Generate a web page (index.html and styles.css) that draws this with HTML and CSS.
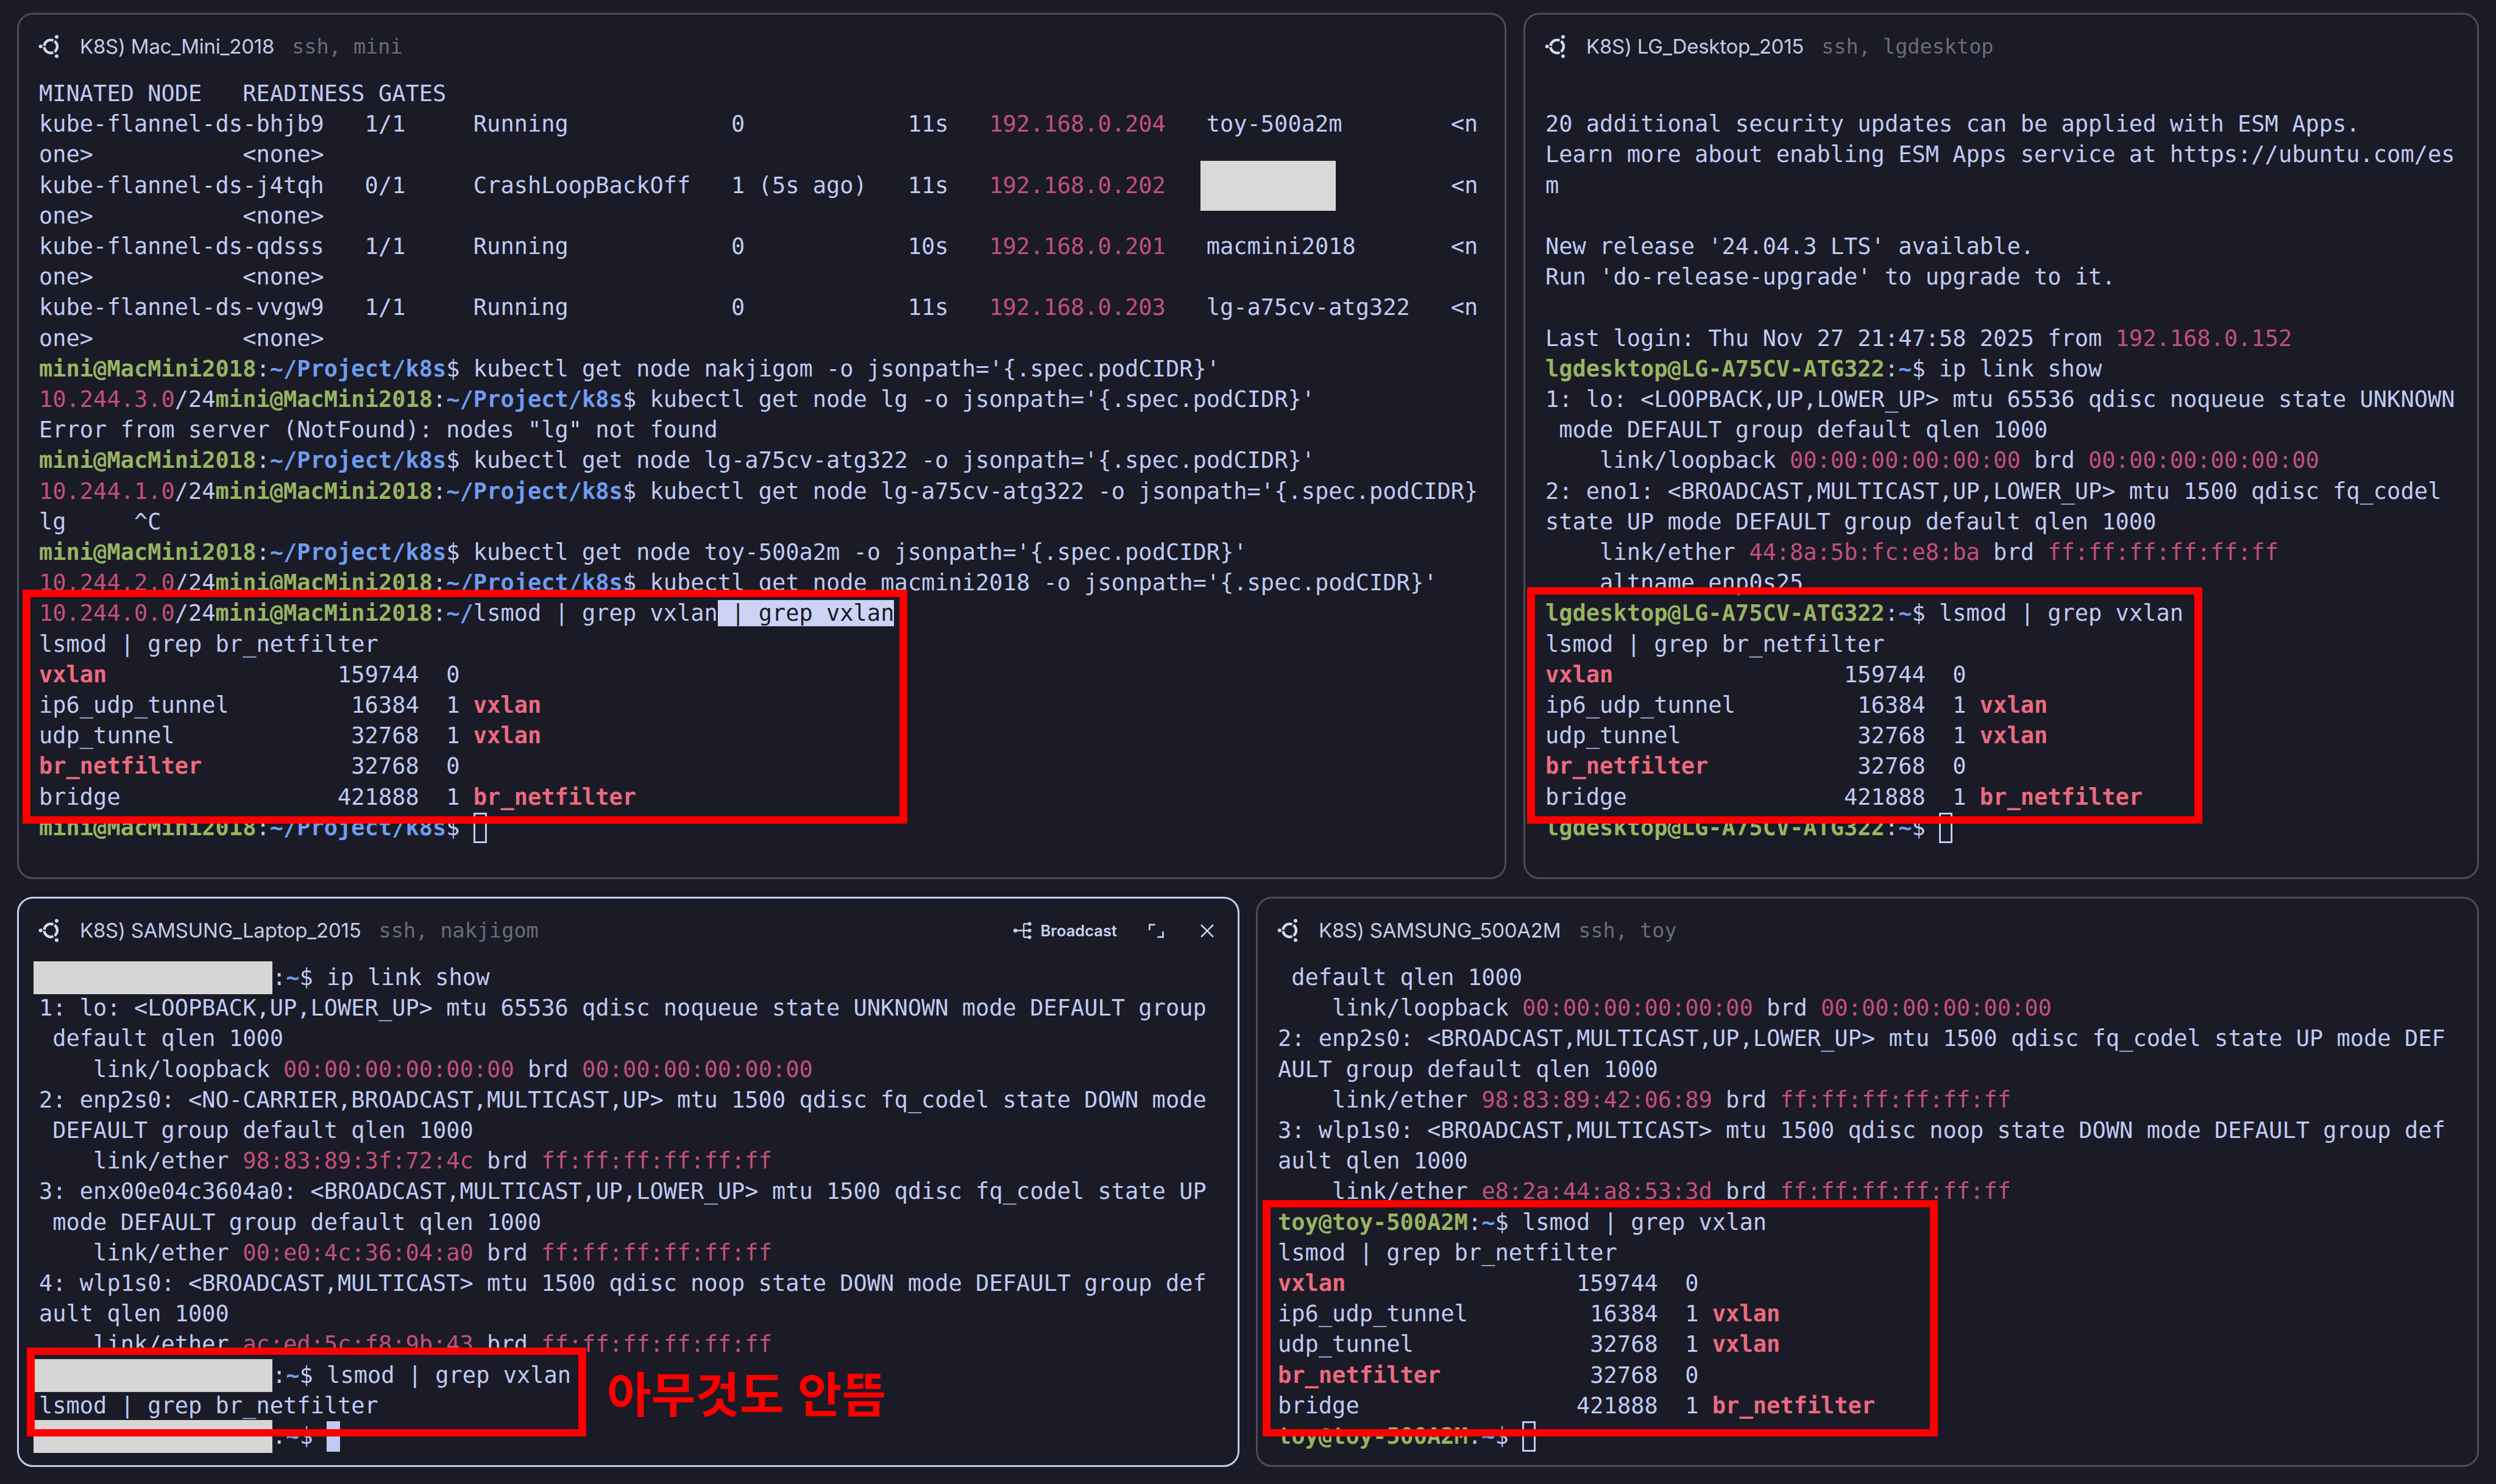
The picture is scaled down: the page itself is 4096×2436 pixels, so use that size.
FILE: index.html
```html
<!DOCTYPE html>
<html lang="en">
<head>
<meta charset="utf-8">
<title>K8S terminals</title>
<link rel="stylesheet" href="styles.css">
</head>
<body>
<main class="screen">
  <svg class="defs" width="0" height="0" aria-hidden="true">
    <symbol id="ubuntu" viewBox="0 0 36 37" overflow="visible">
      <circle cx="19.200" cy="18.300" r="10.700" pathLength="360" fill="none" stroke="currentColor" stroke-width="4.400" stroke-dasharray="54 12 108 12 108 12 54 0"/>
      <g fill="currentColor">
        <circle cx="2.700" cy="18.300" r="3"/>
        <circle cx="29" cy="2.600" r="3"/>
        <circle cx="29" cy="34.200" r="3"/>
      </g>
    </symbol>
  </svg>

  <div class="row row-top">
    <section class="pane pane-tl">
      <header class="tab"><svg class="os"><use href="#ubuntu"/></svg><span class="name">K8S) Mac_Mini_2018</span><span class="cmd">ssh, mini</span></header>
<pre class="term">MINATED NODE   READINESS GATES
kube-flannel-ds-bhjb9   1/1     Running            0            11s   <i>192.168.0.204</i>   toy-500a2m        &lt;n
one&gt;           &lt;none&gt;
kube-flannel-ds-j4tqh   0/1     CrashLoopBackOff   1 (5s ago)   11s   <i>192.168.0.202</i>   <span class="redact-node"></span>        &lt;n
one&gt;           &lt;none&gt;
kube-flannel-ds-qdsss   1/1     Running            0            10s   <i>192.168.0.201</i>   macmini2018       &lt;n
one&gt;           &lt;none&gt;
kube-flannel-ds-vvgw9   1/1     Running            0            11s   <i>192.168.0.203</i>   lg-a75cv-atg322   &lt;n
one&gt;           &lt;none&gt;
<b class="g">mini@MacMini2018</b>:<b class="u">~/Project/k8s</b>$ kubectl get node nakjigom -o jsonpath='{.spec.podCIDR}'
<i>10.244.3.0</i>/24<b class="g">mini@MacMini2018</b>:<b class="u">~/Project/k8s</b>$ kubectl get node lg -o jsonpath='{.spec.podCIDR}'
Error from server (NotFound): nodes "lg" not found
<b class="g">mini@MacMini2018</b>:<b class="u">~/Project/k8s</b>$ kubectl get node lg-a75cv-atg322 -o jsonpath='{.spec.podCIDR}'
<i>10.244.1.0</i>/24<b class="g">mini@MacMini2018</b>:<b class="u">~/Project/k8s</b>$ kubectl get node lg-a75cv-atg322 -o jsonpath='{.spec.podCIDR}
lg     ^C
<b class="g">mini@MacMini2018</b>:<b class="u">~/Project/k8s</b>$ kubectl get node toy-500a2m -o jsonpath='{.spec.podCIDR}'
<i>10.244.2.0</i>/24<b class="g">mini@MacMini2018</b>:<b class="u">~/Project/k8s</b>$ kubectl get node macmini2018 -o jsonpath='{.spec.podCIDR}'
<i>10.244.0.0</i>/24<b class="g">mini@MacMini2018</b>:<b class="u">~/</b>lsmod | grep vxlan<span class="sel"> | grep vxlan</span>
lsmod | grep br_netfilter
<b class="r">vxlan</b>                 159744  0
ip6_udp_tunnel         16384  1 <b class="r">vxlan</b>
udp_tunnel             32768  1 <b class="r">vxlan</b>
<b class="r">br_netfilter</b>           32768  0
bridge                421888  1 <b class="r">br_netfilter</b>
<b class="g">mini@MacMini2018</b>:<b class="u">~/Project/k8s</b>$ <span class="cur"></span></pre>
    </section>

    <section class="pane pane-tr">
      <header class="tab"><svg class="os"><use href="#ubuntu"/></svg><span class="name">K8S) LG_Desktop_2015</span><span class="cmd">ssh, lgdesktop</span></header>
<pre class="term">

20 additional security updates can be applied with ESM Apps.
Learn more about enabling ESM Apps service at https://ubuntu.com/es
m

New release '24.04.3 LTS' available.
Run 'do-release-upgrade' to upgrade to it.

Last login: Thu Nov 27 21:47:58 2025 from <i>192.168.0.152</i>
<b class="g">lgdesktop@LG-A75CV-ATG322</b>:<b class="u">~</b>$ ip link show
1: lo: &lt;LOOPBACK,UP,LOWER_UP&gt; mtu 65536 qdisc noqueue state UNKNOWN
 mode DEFAULT group default qlen 1000
    link/loopback <i>00:00:00:00:00:00</i> brd <i>00:00:00:00:00:00</i>
2: eno1: &lt;BROADCAST,MULTICAST,UP,LOWER_UP&gt; mtu 1500 qdisc fq_codel
state UP mode DEFAULT group default qlen 1000
    link/ether <i>44:8a:5b:fc:e8:ba</i> brd <i>ff:ff:ff:ff:ff:ff</i>
    altname enp0s25
<b class="g">lgdesktop@LG-A75CV-ATG322</b>:<b class="u">~</b>$ lsmod | grep vxlan
lsmod | grep br_netfilter
<b class="r">vxlan</b>                 159744  0
ip6_udp_tunnel         16384  1 <b class="r">vxlan</b>
udp_tunnel             32768  1 <b class="r">vxlan</b>
<b class="r">br_netfilter</b>           32768  0
bridge                421888  1 <b class="r">br_netfilter</b>
<b class="g">lgdesktop@LG-A75CV-ATG322</b>:<b class="u">~</b>$ <span class="cur"></span></pre>
    </section>
  </div>

  <div class="row row-bottom">
    <section class="pane pane-bl">
      <header class="tab"><svg class="os"><use href="#ubuntu"/></svg><span class="name">K8S) SAMSUNG_Laptop_2015</span><span class="cmd">ssh, nakjigom</span>
        <div class="actions">
          <span class="broadcast">
            <svg class="ic-bc" viewBox="0 0 30 30" fill="none" stroke="currentColor" stroke-width="2.400"><path d="M3 14.500H26M17 3.500H26M17 25.500H26M17 3.500V25.500"/><g fill="currentColor" stroke="none"><circle cx="3.200" cy="14.500" r="3.200"/><circle cx="26.500" cy="3.500" r="3"/><circle cx="26.500" cy="14.500" r="3"/><circle cx="26.500" cy="25.500" r="3"/></g></svg>
            Broadcast
          </span>
          <svg class="ic-full" viewBox="0 0 26 24" fill="none" stroke="currentColor" stroke-width="2.800"><path d="M1.500 11V1.500H11M24.500 13V22.500H15"/></svg>
          <svg class="ic-x" viewBox="0 0 22 22" fill="none" stroke="currentColor" stroke-width="2.600"><path d="M1 1L21 21M21 1L1 21"/></svg>
        </div>
      </header>
<pre class="term"><span class="redact"></span>:<b class="u">~</b>$ ip link show
1: lo: &lt;LOOPBACK,UP,LOWER_UP&gt; mtu 65536 qdisc noqueue state UNKNOWN mode DEFAULT group
 default qlen 1000
    link/loopback <i>00:00:00:00:00:00</i> brd <i>00:00:00:00:00:00</i>
2: enp2s0: &lt;NO-CARRIER,BROADCAST,MULTICAST,UP&gt; mtu 1500 qdisc fq_codel state DOWN mode
 DEFAULT group default qlen 1000
    link/ether <i>98:83:89:3f:72:4c</i> brd <i>ff:ff:ff:ff:ff:ff</i>
3: enx00e04c3604a0: &lt;BROADCAST,MULTICAST,UP,LOWER_UP&gt; mtu 1500 qdisc fq_codel state UP
 mode DEFAULT group default qlen 1000
    link/ether <i>00:e0:4c:36:04:a0</i> brd <i>ff:ff:ff:ff:ff:ff</i>
4: wlp1s0: &lt;BROADCAST,MULTICAST&gt; mtu 1500 qdisc noop state DOWN mode DEFAULT group def
ault qlen 1000
    link/ether <i>ac:ed:5c:f8:9b:43</i> brd <i>ff:ff:ff:ff:ff:ff</i>
<span class="redact"></span>:<b class="u">~</b>$ lsmod | grep vxlan
lsmod | grep br_netfilter
<span class="redact"></span>:<b class="u">~</b>$ <span class="cur cur-on"></span></pre>
    </section>

    <section class="pane pane-br">
      <header class="tab"><svg class="os"><use href="#ubuntu"/></svg><span class="name">K8S) SAMSUNG_500A2M</span><span class="cmd">ssh, toy</span></header>
<pre class="term"> default qlen 1000
    link/loopback <i>00:00:00:00:00:00</i> brd <i>00:00:00:00:00:00</i>
2: enp2s0: &lt;BROADCAST,MULTICAST,UP,LOWER_UP&gt; mtu 1500 qdisc fq_codel state UP mode DEF
AULT group default qlen 1000
    link/ether <i>98:83:89:42:06:89</i> brd <i>ff:ff:ff:ff:ff:ff</i>
3: wlp1s0: &lt;BROADCAST,MULTICAST&gt; mtu 1500 qdisc noop state DOWN mode DEFAULT group def
ault qlen 1000
    link/ether <i>e8:2a:44:a8:53:3d</i> brd <i>ff:ff:ff:ff:ff:ff</i>
<b class="g">toy@toy-500A2M</b>:<b class="u">~</b>$ lsmod | grep vxlan
lsmod | grep br_netfilter
<b class="r">vxlan</b>                 159744  0
ip6_udp_tunnel         16384  1 <b class="r">vxlan</b>
udp_tunnel             32768  1 <b class="r">vxlan</b>
<b class="r">br_netfilter</b>           32768  0
bridge                421888  1 <b class="r">br_netfilter</b>
<b class="g">toy@toy-500A2M</b>:<b class="u">~</b>$ <span class="cur"></span></pre>
    </section>
  </div>

  <div class="mark mark-tl"></div>
  <div class="mark mark-tr"></div>
  <div class="mark mark-bl"></div>
  <div class="mark mark-br"></div>
  <p class="note" lang="ko">아무것도 안뜸</p>
</main>
</body>
</html>
```
FILE: styles.css
```css
* { box-sizing: border-box; }
html, body { margin: 0; background: #1a1b26; }
.screen {
  position: relative;
  width: 4096px;
  height: 2436px;
  padding: 21px 28px 28px;
  display: flex;
  flex-direction: column;
  gap: 29px;
  overflow: hidden;
  color: #c0caf5;
}
.defs { position: absolute; }
.row { display: flex; }
.row-top { height: 1422px; gap: 28px; }
.row-bottom { height: 936px; gap: 27px; }
.pane {
  border: 3px solid #4b4c5a;
  border-radius: 26px;
  background: #1a1b26;
  padding: 0 33px;
  min-width: 0;
}
.pane-tl { width: 2444px; }
.pane-tr { width: 1568px; }
.pane-bl { width: 2006px; border-color: #c6cbee; }
.pane-br { width: 2007px; }
.tab {
  height: 105px;
  display: flex;
  align-items: center;
  white-space: nowrap;
}
.os { width: 36px; height: 37px; color: #d5d9f2; margin-right: 31px; flex: none; overflow: visible; }
.name {
  font: 400 33px/1 "Inter", "Liberation Sans", sans-serif;
  letter-spacing: -0.250px;
  color: #c5cbe8;
}
.cmd {
  font: 400 33.500px/1 "DejaVu Sans Mono", monospace;
  color: #6a6c7c;
  margin-left: 29px;
}
.actions {
  margin-left: auto;
  display: flex;
  align-items: center;
  margin-right: 6px;
}
.broadcast {
  display: flex;
  align-items: center;
  gap: 15px;
  font: 600 25.500px/1 "Inter", "Liberation Sans", sans-serif;
  color: #c9cfee;
}
.ic-bc { width: 30px; height: 30px; }
.ic-full { width: 25px; height: 24px; margin-left: 52px; color: #c9cfee; }
.ic-x { width: 22px; height: 22px; margin-left: 60px; color: #c9cfee; }
.term {
  margin: 0;
  font: 400 37px/50.200px "DejaVu Sans Mono", "Liberation Mono", monospace;
  color: #c0caf5;
  white-space: pre;
}
.term i { font-style: normal; color: #c2507c; }
.term b { font-weight: 700; }
.term .g { color: #97b463; }
.term .u { color: #6f9cf0; }
.term .r { color: #ec6a80; }
.sel { background: #cdd3f5; color: #1a1b26; }
.cur {
  display: inline-block;
  width: 22px;
  height: 50px;
  vertical-align: top;
  border: 3px solid #c0caf5;
}
.cur-on { background: #c0caf5; }
.redact {
  display: inline-block;
  width: 392px;
  height: 54px;
  margin: -2px 0 -1.800px -9px;
  vertical-align: top;
  background: #d6d6d6;
}
.redact-node {
  display: inline-block;
  width: 222px;
  height: 82px;
  margin: -16px 11px -15.800px -10px;
  vertical-align: top;
  background: #d9d9d9;
}
.mark {
  position: absolute;
  border: 12px solid #ff0000;
  border-left-width: 13px;
  border-right-width: 13px;
}
.mark-tl { left: 37px; top: 968px; width: 1452px; height: 384px; }
.mark-tr { left: 2506px; top: 964px; width: 1108px; height: 388px; }
.mark-bl { left: 44px; top: 2212px; width: 918px; height: 146px; }
.mark-br { left: 2072px; top: 1970px; width: 1108px; height: 388px; }
.note {
  position: absolute;
  left: 996px;
  top: 2230px;
  margin: 0;
  font: 700 79px/1.400 "Noto Sans CJK KR", sans-serif;
  color: #ff0000;
  white-space: nowrap;
}
```
